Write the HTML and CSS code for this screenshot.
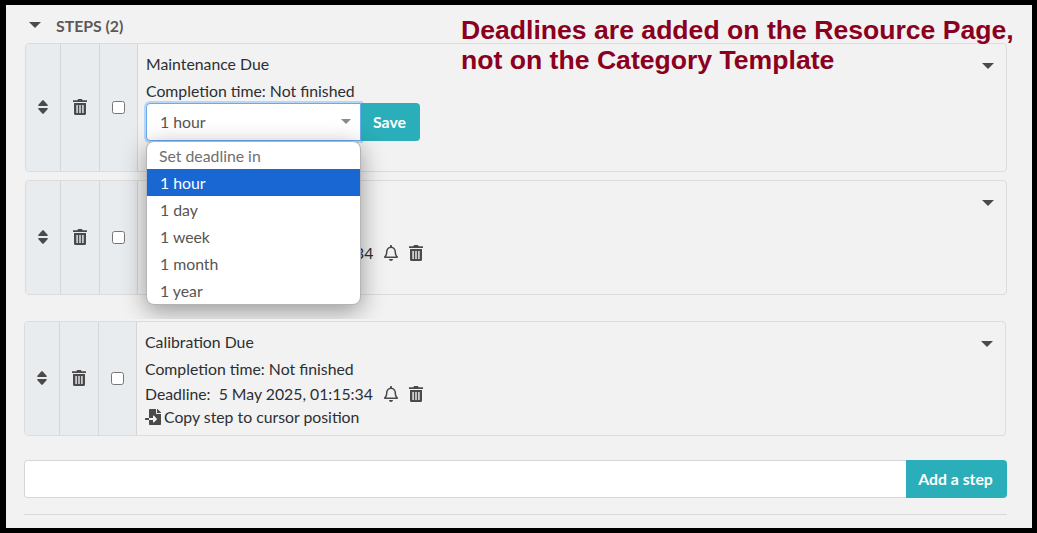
FILE: index.html
```html
<!DOCTYPE html>
<html lang="en">

<head>
  <meta charset="UTF-8">
  <title>Steps</title>
  <link rel="stylesheet" href="styles.css">
</head>

<body>
  <svg class="icon-defs" width="0" height="0">
    <symbol id="i-sort" viewBox="0 0 10 14">
      <path d="M4.300.4a1 1 0 0 1 1.400 0l3.900 4.300c.5.6.2 1.300-.6 1.300H1C.2 6-.1 5.300.4 4.700zM1 8h8c.8 0 1.100.7.6 1.300l-3.900 4.300a1 1 0 0 1-1.400 0L.4 9.300C-.1 8.700.2 8 1 8z" />
    </symbol>
    <symbol id="i-trash" viewBox="0 0 14 16">
      <path fill-rule="evenodd" d="M5 0h4l.6 1.200H14V3H0V1.200h4.400zM1 4h12v10.500a1.500 1.500 0 0 1-1.500 1.500h-9A1.500 1.500 0 0 1 1 14.500zM3.400 6v8h1.400V6zM6.300 6v8h1.400V6zM9.200 6v8h1.400V6z" />
    </symbol>
    <symbol id="i-bell" viewBox="0 0 448 512">
      <path d="M439.390 362.290c-19.320-20.760-55.470-51.990-55.470-154.290 0-77.700-54.480-139.900-127.940-155.160V32c0-17.670-14.320-32-31.980-32s-31.980 14.330-31.980 32v20.840C118.560 68.100 64.080 130.300 64.080 208c0 102.300-36.150 133.530-55.470 154.290-6 6.450-8.660 14.160-8.610 21.710.11 16.400 12.980 32 32.100 32h383.800c19.120 0 32-15.600 32.100-32 .05-7.550-2.610-15.270-8.610-21.710zM67.530 368c21.220-27.970 44.420-74.330 44.530-159.420 0-.2-.06-.38-.06-.58 0-61.860 50.140-112 112-112s112 50.140 112 112c0 .2-.06.38-.06.58.11 85.100 23.310 131.460 44.530 159.420H67.530zM224 512c35.320 0 63.970-28.650 63.970-64H160.030c0 35.350 28.650 64 63.970 64z" />
    </symbol>
    <symbol id="i-copy" viewBox="0 0 512 512">
      <path d="M16 288c-8.800 0-16 7.200-16 16v32c0 8.800 7.200 16 16 16h112v-64zm489-183L407.100 7c-4.500-4.500-10.600-7-17-7H384v128h128v-6.100c0-6.300-2.500-12.400-7-16.900zm-153 31V0H152c-13.300 0-24 10.700-24 24v264h128v-65.200c0-14.300 17.300-21.400 27.400-11.300L379 308c6.600 6.700 6.600 17.400 0 24l-95.700 96.400c-10.100 10.100-27.400 3-27.400-11.300V352H128v136c0 13.300 10.700 24 24 24h336c13.300 0 24-10.700 24-24V160H376c-13.200 0-24-10.800-24-24z" />
    </symbol>
  </svg>

  <div class="frame">
    <div class="steps-header">
      <span class="caret"></span>
      <span class="steps-title">STEPS (2)</span>
    </div>

    <div class="step-card step-first">
      <div class="step-cell cell-sort"><svg class="icon icon-sort"><use href="#i-sort" /></svg></div>
      <div class="step-cell cell-trash"><svg class="icon icon-trash"><use href="#i-trash" /></svg></div>
      <div class="step-cell cell-check"><input type="checkbox" class="step-check"></div>
      <div class="step-body">
        <div class="step-main">
          <div class="step-name">Maintenance Due</div>
          <div class="step-line">Completion time: Not finished</div>
          <div class="deadline-form">
            <div class="deadline-select">
              <span>1 hour</span>
              <span class="caret caret-light"></span>
            </div>
            <button class="save-button">Save</button>
          </div>
          <div class="step-copy"><svg class="icon icon-copy"><use href="#i-copy" /></svg></div>
        </div>
        <span class="caret caret-card"></span>
      </div>
    </div>

    <div class="step-card step-second">
      <div class="step-cell cell-sort"><svg class="icon icon-sort"><use href="#i-sort" /></svg></div>
      <div class="step-cell cell-trash"><svg class="icon icon-trash"><use href="#i-trash" /></svg></div>
      <div class="step-cell cell-check"><input type="checkbox" class="step-check"></div>
      <div class="step-body">
        <div class="step-main">
          <div class="step-name step-hidden">C</div>
          <div class="step-line step-hidden">C</div>
          <div class="step-line step-deadline step-deadline-covered">
            <span>34</span>
            <svg class="icon icon-bell"><use href="#i-bell" /></svg>
            <svg class="icon icon-trash icon-trash-small"><use href="#i-trash" /></svg>
          </div>
          <div class="step-copy"><svg class="icon icon-copy"><use href="#i-copy" /></svg></div>
        </div>
        <span class="caret caret-card"></span>
      </div>
    </div>

    <div class="step-card step-third">
      <div class="step-cell cell-sort"><svg class="icon icon-sort"><use href="#i-sort" /></svg></div>
      <div class="step-cell cell-trash"><svg class="icon icon-trash"><use href="#i-trash" /></svg></div>
      <div class="step-cell cell-check"><input type="checkbox" class="step-check"></div>
      <div class="step-body">
        <div class="step-main">
          <div class="step-name">Calibration Due</div>
          <div class="step-line">Completion time: Not finished</div>
          <div class="step-line step-deadline">
            <span>Deadline:&nbsp; 5 May 2025, 01:15:34</span>
            <svg class="icon icon-bell"><use href="#i-bell" /></svg>
            <svg class="icon icon-trash icon-trash-small"><use href="#i-trash" /></svg>
          </div>
          <div class="step-copy"><svg class="icon icon-copy"><use href="#i-copy" /></svg>Copy step to cursor position</div>
        </div>
        <span class="caret caret-card"></span>
      </div>
    </div>

    <div class="add-step">
      <input type="text" class="add-input">
      <button class="add-button">Add a step</button>
    </div>

    <hr class="divider">

    <ul class="deadline-menu">
      <li class="menu-heading">Set deadline in</li>
      <li class="menu-active">1 hour</li>
      <li>1 day</li>
      <li>1 week</li>
      <li>1 month</li>
      <li>1 year</li>
    </ul>

    <p class="annotation">Deadlines are added on the Resource Page,<br>not on the Category Template</p>
  </div>
</body>

</html>
```

FILE: styles.css
```css
html,
body {
  margin: 0;
  height: 533px;
  overflow: hidden;
}

body {
  font-family: 'Lato', 'Liberation Sans', sans-serif;
  font-size: 15.8px;
  color: #2c2f33;
}

.icon-defs {
  position: absolute;
}

.frame {
  position: relative;
  box-sizing: border-box;
  height: 533px;
  border: solid #000;
  border-width: 5px 5px 5px 6px;
  padding: 0 25px 0 19px;
  background: #f2f2f2;
}

.icon {
  display: block;
  fill: #4a4a4a;
}

.caret {
  display: block;
  width: 0;
  height: 0;
  border-left: 6px solid transparent;
  border-right: 6px solid transparent;
  border-top: 6px solid #4a4a4a;
}

.caret-light {
  border-left-width: 5.5px;
  border-right-width: 5.5px;
  border-top-width: 5px;
  border-top-color: #8a8a8a;
}

.caret-card {
  margin: 11px 12px 0 0;
}

.steps-header {
  display: flex;
  align-items: center;
  gap: 15px;
  height: 36px;
  padding: 2px 0 0 4px;
}

.steps-title {
  font-weight: 700;
  color: #5a5a5a;
}

.step-card {
  display: flex;
  box-sizing: border-box;
  border: 1px solid #dcdcdc;
  border-radius: 4px;
  background: #f2f2f2;
  overflow: hidden;
}

.step-first {
  height: 129px;
  margin-bottom: 8px;
}

.step-second {
  height: 115px;
  margin-bottom: 26px;
}

.step-third {
  position: relative;
  z-index: 2;
  height: 115px;
  margin: 0 1px 24px -1px;
  box-shadow: 0 -2px 0 #f2f2f2;
}

.step-cell {
  display: flex;
  align-items: center;
  justify-content: center;
  background: #e9ecef;
  border-right: 1px solid #d4d7da;
}

.cell-sort {
  width: 34px;
}

.cell-trash {
  width: 38px;
}

.cell-check {
  width: 37px;
}

.step-check {
  margin: 0;
  width: 13px;
  height: 13px;
}

.icon-sort {
  width: 10px;
  height: 14px;
  margin-top: -2px;
}

.icon-trash {
  width: 14px;
  height: 16px;
  margin-top: -1px;
}

.step-body {
  flex: 1;
  display: flex;
  justify-content: space-between;
  padding: 8px 0 5px 8px;
}

.step-name {
  height: 24px;
  line-height: 24px;
  margin-bottom: 3px;
}

.step-line {
  height: 24px;
  line-height: 24px;
}

.step-deadline {
  display: flex;
  align-items: center;
  height: 25px;
}

.step-deadline-covered {
  padding-left: 209px;
}

.icon-bell {
  width: 14px;
  height: 16px;
  margin-left: 11px;
}

.icon-trash-small {
  margin: 0 0 0 11px;
}

.step-copy {
  display: flex;
  align-items: center;
  box-sizing: border-box;
  height: 23px;
  padding-bottom: 2px;
}

.icon-copy {
  width: 16px;
  height: 16px;
  margin-right: 3px;
}

.deadline-form {
  display: flex;
  height: 38px;
}

.deadline-select {
  display: flex;
  align-items: center;
  justify-content: space-between;
  box-sizing: border-box;
  width: 215px;
  padding: 0 9px 2px 13px;
  background: #fff;
  border: 1px solid #6aaaf0;
  box-shadow: 0 0 0 2px #b8d6f5;
  border-radius: 4px 0 0 4px;
  color: #555;
}

.save-button,
.add-button {
  border: none;
  background: #2aaeb9;
  color: #fff;
  font: 700 15.8px 'Lato', 'Liberation Sans', sans-serif;
  padding: 0 2px 2px 0;
}

.save-button {
  position: relative;
  width: 59px;
  border-radius: 0 4px 4px 0;
}

.add-step {
  display: flex;
  height: 38px;
  margin-left: -1px;
}

.add-input {
  flex: 1;
  box-sizing: border-box;
  border: 1px solid #d4d7da;
  border-right: none;
  border-radius: 4px 0 0 4px;
  background: #fff;
}

.add-button {
  width: 101px;
  border-radius: 0 4px 4px 0;
}

.divider {
  margin: 16px 0 0 -1px;
  border: none;
  border-top: 1px solid #d8d8d8;
}

.deadline-menu {
  position: absolute;
  z-index: 1;
  left: 140px;
  top: 136px;
  box-sizing: border-box;
  width: 215px;
  height: 164px;
  margin: 0;
  padding: 0;
  list-style: none;
  background: #fff;
  border: 1px solid #b4b4b4;
  border-radius: 8px;
  box-shadow: 0 6px 24px rgba(0, 0, 0, 0.38);
  overflow: hidden;
  color: #555;
}

.deadline-menu li {
  height: 27px;
  line-height: 27px;
  padding-left: 13px;
}

.deadline-menu .menu-heading {
  padding-left: 12px;
  color: #6f6f6f;
}

.deadline-menu .menu-active {
  background: #1967d2;
  color: #fff;
}

.annotation {
  position: absolute;
  z-index: 3;
  left: 455px;
  top: 10px;
  margin: 0;
  font: 700 26.6px/30px 'Liberation Sans', sans-serif;
  color: #8b0020;
  white-space: nowrap;
}
```
